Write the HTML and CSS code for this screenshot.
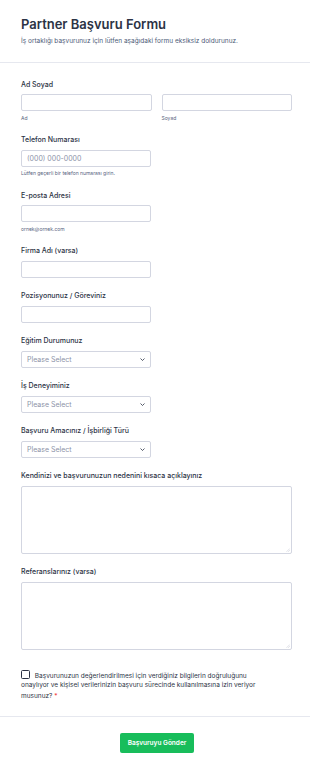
FILE: index.html
```html
<!DOCTYPE html>
<html lang="tr">
<head>
    <meta charset="UTF-8">
    <meta name="viewport" content="width=device-width, initial-scale=1.0">
    <title>Partner Başvuru Formu</title>
    <link rel="stylesheet" href="styles.css">
</head>
<body>
    <header class="form-header">
        <h1>Partner Başvuru Formu</h1>
        <p>İş ortaklığı başvurunuz için lütfen aşağıdaki formu eksiksiz doldurunuz.</p>
    </header>

    <form class="form-body">
        <div class="field">
            <label class="field-label">Ad Soyad</label>
            <div class="name-row">
                <div class="name-col">
                    <input type="text" class="input">
                    <span class="sublabel">Ad</span>
                </div>
                <div class="name-col">
                    <input type="text" class="input">
                    <span class="sublabel">Soyad</span>
                </div>
            </div>
        </div>

        <div class="field">
            <label class="field-label" for="tel">Telefon Numarası</label>
            <input type="tel" id="tel" class="input input-half" placeholder="(000) 000-0000">
            <span class="sublabel">Lütfen geçerli bir telefon numarası girin.</span>
        </div>

        <div class="field">
            <label class="field-label" for="email">E-posta Adresi</label>
            <input type="email" id="email" class="input input-half">
            <span class="sublabel">ornek@ornek.com</span>
        </div>

        <div class="field">
            <label class="field-label" for="firma">Firma Adı (varsa)</label>
            <input type="text" id="firma" class="input input-half">
        </div>

        <div class="field">
            <label class="field-label" for="pozisyon">Pozisyonunuz / Göreviniz</label>
            <input type="text" id="pozisyon" class="input input-half">
        </div>

        <div class="field">
            <label class="field-label" for="egitim">Eğitim Durumunuz</label>
            <div class="select-wrap">
                <select id="egitim" class="select"><option>Please Select</option></select>
                <svg class="chevron" viewBox="0 0 10 6" width="5" height="3"><path d="M1 1l4 4 4-4" fill="none" stroke="#2c3345" stroke-width="1.6"/></svg>
            </div>
        </div>

        <div class="field">
            <label class="field-label" for="deneyim">İş Deneyiminiz</label>
            <div class="select-wrap">
                <select id="deneyim" class="select"><option>Please Select</option></select>
                <svg class="chevron" viewBox="0 0 10 6" width="5" height="3"><path d="M1 1l4 4 4-4" fill="none" stroke="#2c3345" stroke-width="1.6"/></svg>
            </div>
        </div>

        <div class="field">
            <label class="field-label" for="amac">Başvuru Amacınız / İşbirliği Türü</label>
            <div class="select-wrap">
                <select id="amac" class="select"><option>Please Select</option></select>
                <svg class="chevron" viewBox="0 0 10 6" width="5" height="3"><path d="M1 1l4 4 4-4" fill="none" stroke="#2c3345" stroke-width="1.6"/></svg>
            </div>
        </div>

        <div class="field">
            <label class="field-label" for="aciklama">Kendinizi ve başvurunuzun nedenini kısaca açıklayınız</label>
            <div class="textarea-wrap">
                <textarea id="aciklama" class="textarea"></textarea>
                <svg class="grip" viewBox="0 0 4 4" width="4" height="4"><path d="M0.5 3.8L3.8 0.5M2.2 3.8L3.8 2.2" stroke="#c9ccd6" stroke-width="0.6"/></svg>
            </div>
        </div>

        <div class="field">
            <label class="field-label" for="referans">Referanslarınız (varsa)</label>
            <div class="textarea-wrap">
                <textarea id="referans" class="textarea"></textarea>
                <svg class="grip" viewBox="0 0 4 4" width="4" height="4"><path d="M0.5 3.8L3.8 0.5M2.2 3.8L3.8 2.2" stroke="#c9ccd6" stroke-width="0.6"/></svg>
            </div>
        </div>

        <div class="consent">
            <input type="checkbox" id="onay" class="checkbox">
            <label for="onay">Başvurunuzun değerlendirilmesi için verdiğiniz bilgilerin doğruluğunu onaylıyor ve kişisel verilerinizin başvuru sürecinde kullanılmasına izin veriyor musunuz? <span class="required">*</span></label>
        </div>

        <div class="form-footer">
            <button type="button" class="btn">Başvuruyu Gönder</button>
        </div>
    </form>
</body>
</html>
```

FILE: styles.css
```css
body {
    font-family: Inter, "Noto Sans", Arial, sans-serif;
    background: #fff;
    color: #2c3345;
    margin: 0;
    padding: 0;
}
.form-header {
    padding: 16px 18px 16px 21px;
    border-bottom: 1px solid #e6e8ef;
}
.form-header h1 {
    margin: 0;
    font-size: 13px;
    line-height: 16px;
    font-weight: 600;
    color: #2c3345;
}
.form-header p {
    margin: 4.5px 0 0;
    font-size: 6.5px;
    line-height: 9px;
    color: #4d5b78;
}
.form-body {
    padding: 17px 18px 0 21px;
}
.field {
    margin-bottom: 13.5px;
}
.field-label {
    display: block;
    font-size: 7px;
    line-height: 10px;
    font-weight: 500;
    margin-bottom: 4.5px;
}
.name-row {
    display: flex;
    gap: 10px;
}
.name-col {
    flex: 1;
}
.input,
.select,
.textarea {
    box-sizing: border-box;
    display: block;
    width: 100%;
    height: 17px;
    margin: 0;
    padding: 0 5px;
    border: 1px solid #d3d6e1;
    border-radius: 2px;
    background: #fff;
    font-family: inherit;
    font-size: 7px;
    color: #2c3345;
    outline: none;
}
.input::placeholder {
    color: #8d93a8;
}
.input-half {
    width: 130px;
}
.sublabel {
    display: block;
    margin-top: 3.5px;
    font-size: 5px;
    line-height: 7px;
    color: #57647e;
}
.select-wrap {
    position: relative;
    width: 130px;
}
.select {
    appearance: none;
    -webkit-appearance: none;
    color: #8d93a8;
}
.chevron {
    position: absolute;
    right: 6px;
    top: 7px;
}
.textarea-wrap {
    position: relative;
}
.textarea {
    height: 68px;
    padding: 4px 5px;
    resize: none;
}
.grip {
    position: absolute;
    right: 2px;
    bottom: 2px;
}
.consent {
    margin-top: 20px;
    font-size: 6.5px;
    line-height: 10.4px;
    color: #2c3345;
    padding-right: 20px;
}
.checkbox {
    appearance: none;
    -webkit-appearance: none;
    box-sizing: border-box;
    width: 9px;
    height: 9px;
    margin: 0 3px 0 0;
    border: 1px solid #2c3345;
    border-radius: 1.5px;
    vertical-align: -1.5px;
}
.required {
    color: #f23a3c;
}
.form-footer {
    margin: 15px -18px 0 -21px;
    padding: 12px 0 16px;
    border-top: 1px solid #e6e8ef;
    text-align: center;
}
.btn {
    width: 74px;
    height: 20px;
    padding: 0;
    margin-left: 4px;
    background: #18bd5b;
    color: #fff;
    border: none;
    border-radius: 2px;
    font-family: inherit;
    font-size: 6.5px;
    font-weight: 600;
    cursor: pointer;
}
```
